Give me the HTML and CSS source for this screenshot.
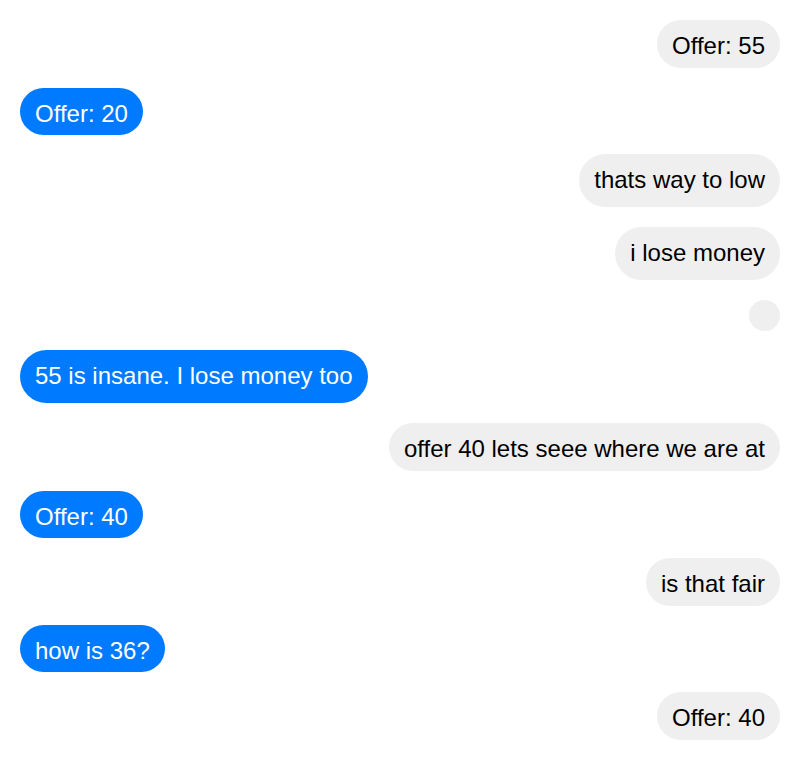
FILE: index.html
```html
<!DOCTYPE html>
<html>
<head>
<meta charset="utf-8">
<link rel="stylesheet" href="styles.css">
</head>
<body>
<div class="chat">
  <div class="msg me">Offer: 55</div>
  <div class="msg them">Offer: 20</div>
  <div class="msg me tall">thats way to low</div>
  <div class="msg me tall">i lose money</div>
  <div class="msg me dot"></div>
  <div class="msg them tall">55 is insane. I lose money too</div>
  <div class="msg me">offer 40 lets seee where we are at</div>
  <div class="msg them">Offer: 40</div>
  <div class="msg me">is that fair</div>
  <div class="msg them">how is 36?</div>
  <div class="msg me">Offer: 40</div>
</div>
</body>
</html>
```
FILE: styles.css
```css
html, body {
  margin: 0;
  padding: 0;
  background: #ffffff;
}
.chat {
  display: flex;
  flex-direction: column;
  gap: 19.7px;
  padding: 20px;
  font-family: "Liberation Sans", Arial, sans-serif;
  font-size: 24px;
}
.msg {
  box-sizing: border-box;
  height: 48px;
  padding: 12px 15px 8px;
  line-height: 28px;
  border-radius: 27px;
  white-space: nowrap;
}
.me {
  align-self: flex-end;
  background: #efefef;
  color: #000000;
}
.them {
  align-self: flex-start;
  background: #007aff;
  color: #ffffff;
  height: 47px;
}
.tall {
  height: 53px;
}
.dot {
  width: 31px;
  height: 31px;
  padding: 0;
  border-radius: 50%;
}
```
